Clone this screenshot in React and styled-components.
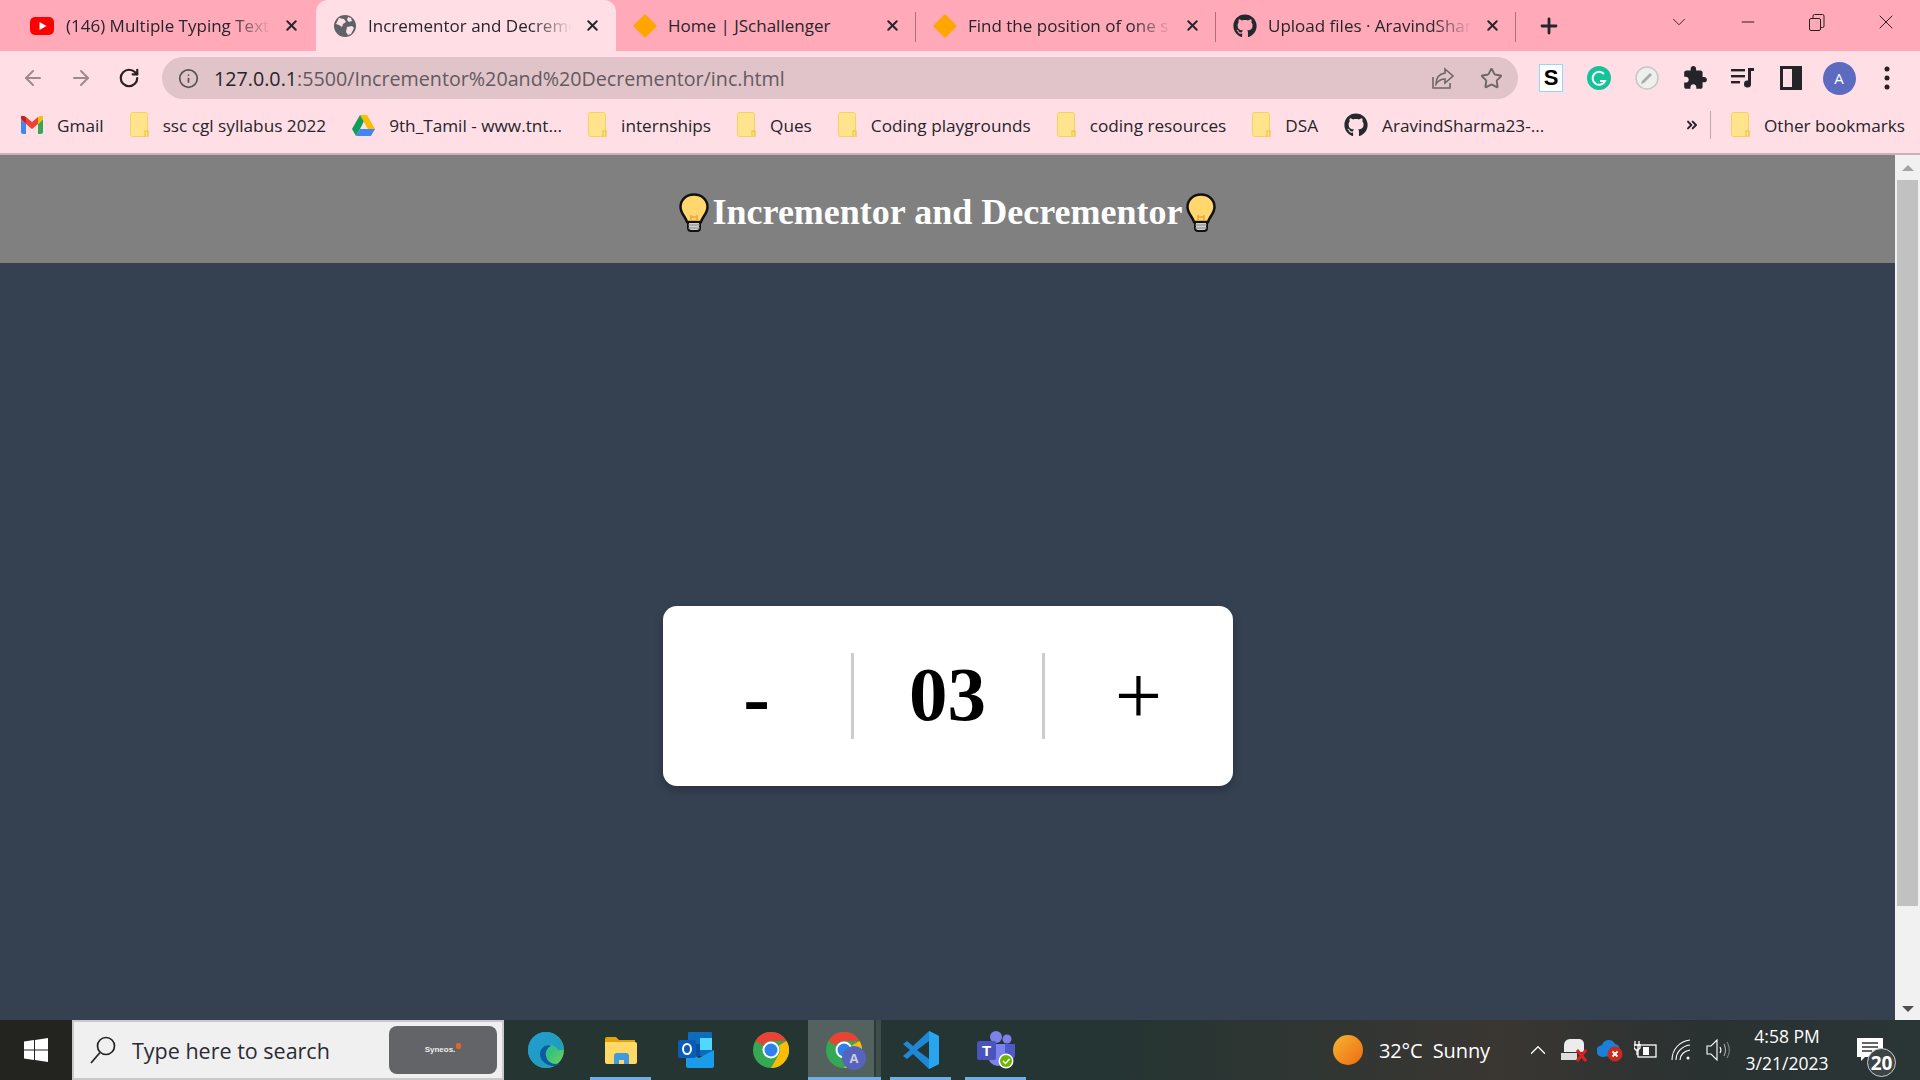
import React from 'react';
import styled, { createGlobalStyle } from 'styled-components';
import { X, Plus, ArrowLeft, ArrowRight, RotateCw, Info, Star, ChevronUp, ChevronDown, Minus, ChevronsRight } from 'lucide-react';
import { FaGithub } from 'react-icons/fa';

const Global = createGlobalStyle`
  html, body { margin: 0; padding: 0; width: 1920px; height: 1080px; overflow: hidden; background: #354051; }
  * { box-sizing: border-box; }
  #root { width: 1920px; height: 1080px; }
`;
const UI = '"Open Sans", "Noto Sans", sans-serif';

const Screen = styled.div`display: flex; flex-direction: column; width: 1920px; height: 1080px; font-family: ${UI}; color: #25252b;`;
const TabStrip = styled.div`display: flex; align-items: stretch; height: 51px; padding-left: 16px; background: #ffa9b9;`;
const Tab = styled.div`
  position: relative; display: flex; align-items: center; width: 300px; padding: 0 ${p => p.$first ? 16 : 15}px 0 ${p => p.$first ? 14 : 17}px;
  border-radius: 12px 12px 0 0; background: ${p => p.$active ? '#ffdfe5' : 'transparent'};
  ${p => p.$sep && `&::after { content: ''; position: absolute; right: 0; top: 12px; height: 30px; width: 1px; background: #a5737e; }`}
`;
const TabIcon = styled.span`display: flex; align-items: center; justify-content: center; flex: none; width: 24px; height: 24px; margin-right: ${p => p.$first ? 12 : 11}px;`;
const TabTitle = styled.span`
  flex: 1; min-width: 0; white-space: nowrap; overflow: hidden; font-size: 17px;
  mask-image: linear-gradient(to right, #000 80%, transparent 100%);
  ${p => p.$noFade && 'mask-image: none;'}
`;
const TabClose = styled(X)`flex: none; margin-left: 12px; margin-right: 0; stroke-width: 2.8;`;
const NewTab = styled(Plus)`align-self: center; margin-left: 21px; stroke-width: 2.8;`;
const WindowControls = styled.div`display: flex; margin-left: auto; align-items: center; height: 44px;`;
const WinBtn = styled.div`display: flex; align-items: center; justify-content: center; width: 69px; height: 44px; color: #222;`;

const Toolbar = styled.div`display: flex; align-items: center; height: 48px; padding: 6px 0 0 9px; background: #ffdfe5;`;
const NavBtn = styled.div`display: flex; align-items: center; justify-content: center; width: 48px; height: 42px; color: ${p => p.$dim ? '#9b8b90' : '#222'};`;
const UrlBar = styled.div`display: flex; align-items: center; width: 1356px; height: 42px; margin-left: 9px; padding: 0 3px 0 16px; border-radius: 21px; background: #e0c4c9;`;
const UrlInfo = styled(Info)`flex: none; color: #555; margin-right: 15px;`;
const UrlText = styled.span`flex: 1; font-size: 19.7px; color: #635a60; white-space: nowrap; b { font-weight: 400; color: #25252b; }`;
const UrlAction = styled.div`display: flex; justify-content: center; width: 48px; color: #6e6569;`;
const ExtBtn = styled.div`display: flex; align-items: center; justify-content: center; flex: none; width: 48px; height: 42px; color: #222428;`;
const Extensions = styled.div`display: flex; margin-left: 9px;`;
const SBox = styled.div`display: flex; align-items: center; justify-content: center; width: 24px; height: 28px; background: #fff; border: 1px solid #8ed8ff; color: #000; font: 900 22px/1 "Liberation Sans", sans-serif;`;
const Avatar = styled.div`display: flex; align-items: center; justify-content: center; width: 33px; height: 33px; border-radius: 50%; background: #5c6bc0; color: #fff; font-size: 15px;`;

const Bookmarks = styled.div`display: flex; align-items: center; height: 56px; padding: 0 15px 2px 21px; background: #ffdfe5; border-bottom: 2px solid #cbb2b8;`;
const Bookmark = styled.div`display: flex; align-items: center; gap: 14px; margin-right: 26px; font-size: 17.2px; white-space: nowrap;`;
const BookmarkRight = styled(Bookmark)`margin-right: 0; margin-left: 20px;`;
const Chevrons = styled(ChevronsRight)`margin-left: auto; margin-right: 10px; stroke-width: 3;`;
const BarSep = styled.div`flex: none; width: 1px; height: 28px; background: #bfa6ac;`;

const Viewport = styled.div`flex: 1; min-height: 0; display: flex;`;
const Page = styled.div`flex: 1; display: flex; flex-direction: column; background: #354051; min-width: 0;`;
const Header = styled.header`display: flex; align-items: center; justify-content: center; gap: 4px; height: 108px; padding-top: 6px; background: #808080;`;
const Title = styled.h1`margin: 0; font: 700 36px/1 "Liberation Serif", "Times New Roman", serif; color: #fff;`;
const Stage = styled.main`flex: 1; display: flex; justify-content: center; align-items: flex-start; padding-top: 343px;`;
const Card = styled.div`display: grid; grid-template-columns: 188px 194px 188px; align-items: center; height: 180px; border-radius: 14px; background: #fff; box-shadow: 0 4px 10px rgba(0,0,0,.22);`;
const Cell = styled.div`
  display: flex; align-items: center; justify-content: center; height: 86px; padding-top: ${p => p.$dy || 0}px; padding-bottom: ${p => p.$up || 0}px;
  font: ${p => p.$weight || 700} ${p => p.$size || 77}px/1 "Liberation Serif", "Times New Roman", serif; color: #000;
  ${p => p.$divided && 'border-left: 3px solid #ccc; border-right: 3px solid #ccc;'}
`;
const Scrollbar = styled.aside`flex: none; display: flex; flex-direction: column; align-items: center; width: 25px; background: #f1f1f1; padding-top: 10px;`;
const ScrollArrow = styled.div`flex: none; width: 0; height: 0; border-left: 6px solid transparent; border-right: 6px solid transparent; ${p => p.$down ? 'border-top: 6px solid #505050; margin-bottom: 8px;' : 'border-bottom: 6px solid #a3a3a3;'}`;
const Thumb = styled.div`flex: none; width: 21px; height: 726px; margin-top: 9px; background: #c1c1c1;`;
const ScrollSpacer = styled.div`flex: 1;`;

const Taskbar = styled.footer`display: flex; align-items: stretch; height: 60px; color: #fff; background: linear-gradient(90deg, #23241f 0, #23241f 72px, #243532 510px, #243533 1100px, #3a3632 1500px, #2a3231 1700px, #2a3536 100%);`;
const StartBtn = styled.div`display: flex; align-items: center; justify-content: center; width: 72px;`;
const SearchBox = styled.div`display: flex; align-items: center; width: 432px; padding: 0 5px 0 16px; background: #f0f0f0; border: 2px solid #c9c9c9; color: #2a2a35; font-size: 21.5px;`;
const SearchGlyph = styled.span`display: flex; flex: none; margin-right: 16px;`;
const SearchText = styled.span`flex: 1;`;
const Promo = styled.div`display: flex; align-items: center; justify-content: center; gap: 1px; width: 108px; height: 48px; border-radius: 8px; background: #626468; color: #eee; font: 700 8px/1 "Liberation Sans", sans-serif;`;
const PromoDot = styled.i`width: 5px; height: 6px; margin-top: -8px; border-radius: 2px; background: #e8632a;`;
const Apps = styled.div`display: flex; padding-left: 4px;`;
const AppSlot = styled.div`
  position: relative; display: flex; align-items: center; justify-content: center; width: 75px;
  ${p => p.$active && 'background: linear-gradient(90deg, #53625f 66px, #2c3b39 66px, #2c3b39 68px, #3f4d4b 68px, #3f4d4b 73px, transparent 73px);'}
  ${p => p.$running && `&::after { content: ''; position: absolute; left: ${p.$active ? 0 : 7}px; right: ${p.$active ? 2 : 7}px; bottom: 0; height: 3px; background: #6cb0e5; }`}
`;
const ProfileWrap = styled.div`position: relative; display: flex; margin-left: -3px;`;
const ProfileBadge = styled.span`position: absolute; right: -4px; bottom: -2px; display: flex; align-items: center; justify-content: center; width: 24px; height: 24px; border-radius: 50%; background: #5664bd; color: #ccd; font-size: 13px; font-weight: 700;`;
const Tray = styled.div`display: flex; align-items: center; margin-left: auto;`;
const Weather = styled.div`display: flex; align-items: center; gap: 16px; font-size: 20px; letter-spacing: -0.1px; white-space: pre; margin-right: 30px;`;
const TrayIcon = styled.div`display: flex; align-items: center; justify-content: center; width: 36px;`;
const Clock = styled.div`display: flex; flex-direction: column; align-items: center; width: 100px; margin-left: 1px; font-size: 17.5px; line-height: 27px;`;
const Notify = styled.div`position: relative; display: flex; justify-content: center; width: 83px; padding-right: 17px;`;
const NotifyBadge = styled.div`position: absolute; left: 30px; top: 10px; display: flex; align-items: center; justify-content: center; width: 29px; height: 29px; border-radius: 50%; border: 1.5px solid #ccc; background: #3d4444; font-size: 19px; font-weight: 700;`;

const Yt = () => <svg width="24" height="18" viewBox="0 0 24 18"><rect width="24" height="18" rx="5" fill="#f00"/><path d="M9.5 5v8l7-4z" fill="#fff"/></svg>;
const Globe = () => <svg width="22" height="22" viewBox="0 0 22 22"><circle cx="11" cy="11" r="11" fill="#5f6368"/><path d="M5 3l5 1 2 3-3 2-1 3-3-2-3-1zM13 12l5-1 2 2-3 6-3 1-2-3zM14 2l3 1 1 3-3 1-2-2z" fill="#ffdfe5"/></svg>;
const Diamond = () => <svg width="24" height="24" viewBox="0 0 24 24"><path d="M12 0l12 12-12 12L0 12z" fill="#ffa500"/></svg>;
const Folder = () => <svg width="19" height="26" viewBox="0 0 19 26"><rect x=".5" y=".5" width="17" height="24" rx="2" fill="#ffe38d" stroke="#f5d25f"/><path d="M15 25v-6h3v6" fill="none" stroke="#f0c94f" strokeWidth="1.4"/></svg>;
const Gmail = () => <svg width="22" height="18" viewBox="0 0 22 18"><path d="M0 3v13a2 2 0 0 0 2 2h3V8z" fill="#4285f4"/><path d="M22 3v13a2 2 0 0 1-2 2h-3V8z" fill="#34a853"/><path d="M5 8l6 5 6-5V1l-6 5-6-5z" fill="#ea4335"/><path d="M0 3l5 5V1L3.5.2A2.2 2.2 0 0 0 0 3z" fill="#c5221f"/><path d="M22 3l-5 5V1l1.500-.8A2.200 2.200 0 0 1 22 3z" fill="#fbbc04"/></svg>;
const Drive = () => <svg width="23" height="21" viewBox="0 0 23 21"><path d="M8 0h7L8 14 4 21 0 14z" fill="#0f9d58"/><path d="M8 0h7l8 14h-7z" fill="#fbbc04"/><path d="M4 21l4-7h15l-4 7z" fill="#4285f4"/></svg>;
const Share = () => <svg width="24" height="24" viewBox="0 0 24 24" fill="none" stroke="currentColor" strokeWidth="1.6"><path d="M2 11v11h17v-5"/><path d="M14 3l8 7-8 7v-4c-5 0-7 2-9 5 0-6 3-10 9-11z"/></svg>;
const Grammarly = () => <svg width="24" height="24" viewBox="0 0 24 24"><circle cx="12" cy="12" r="12" fill="#15c39a"/><path d="M17 8a6.500 6.500 0 1 0 1 7h-5" fill="none" stroke="#fff" strokeWidth="2"/></svg>;
const Compass = () => <svg width="24" height="24" viewBox="0 0 24 24"><circle cx="12" cy="12" r="11" fill="#eef0ee" stroke="#c5c9c5" strokeWidth="1.500"/><path d="M7 15l8-8 2 2-8 8-3 1z" fill="#aaa"/></svg>;
const Puzzle = () => <svg width="26" height="26" viewBox="0 0 24 24" fill="#222428"><path d="M20.500 11H19V7c0-1.100-.9-2-2-2h-4V3.500C13 2.120 11.880 1 10.500 1S8 2.120 8 3.500V5H4c-1.100 0-1.990.9-1.990 2v3.800H3.500c1.490 0 2.700 1.210 2.700 2.700s-1.210 2.700-2.700 2.700H2V20c0 1.100.9 2 2 2h3.800v-1.500c0-1.490 1.210-2.700 2.700-2.700 1.490 0 2.700 1.210 2.700 2.700V22H17c1.100 0 2-.9 2-2v-4h1.500c1.380 0 2.500-1.120 2.500-2.500S21.880 11 20.500 11z"/></svg>;
const Music = () => <svg width="24" height="22" viewBox="0 0 24 22" fill="#222428"><rect y="2" width="14" height="2.400"/><rect y="8" width="14" height="2.400"/><rect y="14" width="9" height="2.400"/><path d="M17 1h6v3h-3v13a3.500 3.500 0 1 1-3-3.400z"/></svg>;
const SidePanel = () => <svg width="22" height="24" viewBox="0 0 22 24"><rect width="22" height="24" fill="#222428"/><rect x="3" y="3" width="9" height="18" fill="#ffdfe5"/></svg>;
const Dots = () => <svg width="6" height="24" viewBox="0 0 6 24" fill="#222"><circle cx="3" cy="3" r="2.500"/><circle cx="3" cy="12" r="2.500"/><circle cx="3" cy="21" r="2.500"/></svg>;
const Bulb = () => <svg width="30" height="39" viewBox="0 0 30 39"><path d="M15 1.500C7 1.500 1.500 7 1.500 14c0 6.500 5 9.500 6.500 15h14c1.500-5.500 6.500-8.500 6.500-15C28.500 7 23 1.500 15 1.500z" fill="#ffd76e" stroke="#111" strokeWidth="2.500"/><path d="M12 29v-7M18 29v-7M12 24h6" stroke="#f2a33a" strokeWidth="1.500" fill="none"/><path d="M9 29h12v6a3 3 0 0 1-3 3h-6a3 3 0 0 1-3-3z" fill="#cfcfcf" stroke="#111" strokeWidth="2"/><path d="M9 32h12M9 35h12" stroke="#888" strokeWidth="1"/></svg>;
const Windows = () => <svg width="24" height="24" viewBox="0 0 24 24" fill="#fff"><path d="M0 3.500l10-1.400v9.300H0zM11 2l13-2v11.400H11zM0 12.500h10v9.400L0 20.500zM11 12.500h13V24l-13-2z"/></svg>;
const Lens = () => <svg width="26" height="28" viewBox="0 0 26 28" fill="none" stroke="#222" strokeWidth="1.700"><circle cx="16" cy="10" r="8.500"/><path d="M10 16.500L1 27"/></svg>;
const Edge = () => <svg width="36" height="36" viewBox="0 0 36 36"><defs><linearGradient id="e1" x1="0" y1="0" x2="1" y2="1"><stop offset="0" stopColor="#33c6d8"/><stop offset=".6" stopColor="#35c27e"/><stop offset="1" stopColor="#7bd44f"/></linearGradient></defs><circle cx="18" cy="18" r="18" fill="url(#e1)"/><path d="M18 0C8 0 0 8 0 18c0 10 8 18 18 18 5 0 9-2 12-5-6 2-14 1-17-5-2-5 0-11 6-13 5-1 9 1 11 5h6C35 8 28 0 18 0z" fill="#1b8fd6" opacity=".75"/><path d="M21 13c-5 0-9 4-9 9 0 6 6 12 14 12 2 0 4-1 6-2-7 1-13-2-14-8-1-4 1-8 5-10z" fill="#0c59a4"/></svg>;
const Explorer = () => <svg width="32" height="29" viewBox="0 0 32 29"><path d="M0 3a2 2 0 0 1 2-2h9l3 3h16v5H0z" fill="#e0a30c"/><path d="M0 6h30a2 2 0 0 1 2 2v18a2 2 0 0 1-2 2H2a2 2 0 0 1-2-2z" fill="#ffd966"/><path d="M9 28v-8a3 3 0 0 1 3-3h9a3 3 0 0 1 3 3v8h-5v-4h-5v4z" fill="#3f9ae0"/></svg>;
const Outlook = () => <svg width="36" height="36" viewBox="0 0 36 36"><rect x="10" y="0" width="24" height="24" rx="1" fill="#0f6cbd"/><rect x="22" y="6" width="12" height="12" fill="#50d9ff"/><rect x="10" y="12" width="12" height="12" fill="#0b4f9e"/><path d="M8 18l13 8 15-8v16a2 2 0 0 1-2 2H10a2 2 0 0 1-2-2z" fill="#1a9ce8"/><rect x="0" y="8" width="18" height="18" rx="2" fill="#0a5cb8"/><ellipse cx="9" cy="17" rx="4" ry="5" fill="none" stroke="#fff" strokeWidth="2"/></svg>;
const Chrome = () => <svg width="36" height="36" viewBox="0 0 36 36"><circle cx="18" cy="18" r="18" fill="#34a853"/><path d="M18 0a18 18 0 0 1 15.600 9H18a9 9 0 0 0-7.800 4.500L2.400 9A18 18 0 0 1 18 0z" fill="#ea4335"/><path d="M33.600 9A18 18 0 0 1 18 36l7.800-13.500A9 9 0 0 0 25.800 13.500z" fill="#fbbc04"/><circle cx="18" cy="18" r="8.500" fill="#fff"/><circle cx="18" cy="18" r="6.500" fill="#2f80ed"/></svg>;
const VSCode = () => <svg width="36" height="38" viewBox="0 0 36 38"><path d="M26 0l10 5v28l-10 5-16-15-6 5-4-3 7-6-7-6 4-3 6 5z" fill="#1e88d6"/><path d="M26 0l10 5v28l-10 5z" fill="#27a5ee"/><path d="M26 10L14 19l12 9z" fill="#243532"/></svg>;
const Teams = () => <svg width="38" height="38" viewBox="0 0 38 38"><circle cx="30" cy="8" r="4.500" fill="#7b83eb"/><circle cx="19" cy="6" r="6" fill="#7b83eb"/><path d="M22 13h16v11a6 6 0 0 1-6 6h-5z" fill="#5059c9"/><path d="M11 13h17v15a7 7 0 0 1-7 7 10 10 0 0 1-10-10z" fill="#7b83eb"/><rect x="0" y="10" width="19" height="19" rx="2" fill="#4b53bc"/><text x="9.500" y="25" textAnchor="middle" fontSize="15" fontWeight="700" fill="#fff" fontFamily="Liberation Sans">T</text><circle cx="29" cy="30" r="7.500" fill="#fff"/><circle cx="29" cy="30" r="6" fill="#6bb700"/><path d="M26 30l2.500 2.500 4-4.500" fill="none" stroke="#fff" strokeWidth="1.500"/></svg>;
const Sun = () => <svg width="30" height="30" viewBox="0 0 30 30"><defs><linearGradient id="s1" x1="0" y1="0" x2="1" y2="1"><stop offset="0" stopColor="#f2b632"/><stop offset="1" stopColor="#f06a10"/></linearGradient></defs><circle cx="15" cy="15" r="15" fill="url(#s1)"/></svg>;
const Usb = () => <svg width="26" height="24" viewBox="0 0 26 24"><path d="M3 7a6 6 0 0 1 6-6h9a5 5 0 0 1 5 5v8H3z" fill="#ececec"/><rect x="0" y="15" width="16" height="7" fill="#ddd"/><path d="M16 12l9 11M25 12l-9 11" stroke="#e02020" strokeWidth="3"/></svg>;
const Cloud = () => <svg width="26" height="24" viewBox="0 0 26 24"><path d="M6 19a6 6 0 0 1-1-12 7 7 0 0 1 13-1 6 6 0 0 1 2 11z" fill="#1a7fd8"/><circle cx="18" cy="16" r="7.500" fill="#c92a1e"/><path d="M15.500 13.500l5 5M20.500 13.500l-5 5" stroke="#fff" strokeWidth="1.800"/></svg>;
const Battery = () => <svg width="24" height="20" viewBox="0 0 24 20" fill="none" stroke="#fff" strokeWidth="1.300"><rect x="4" y="5" width="18" height="12"/><rect x="9" y="7" width="6" height="8" fill="#fff" stroke="none"/><path d="M1 1v4M5 1v4M0 5h6v3l-2 2H2L0 8zM3 10v5"/></svg>;
const Wifi = () => <svg width="22" height="22" viewBox="0 0 22 22" fill="none" stroke="#fff" strokeWidth="1.100"><path d="M1 21C1 10 9 2 19 1M5 21c0-8 6-14 14-15M9 21c0-5 4-9 10-10"/><circle cx="17" cy="19" r="1.500" fill="#fff" stroke="none"/></svg>;
const Speaker = () => <svg width="24" height="22" viewBox="0 0 24 22" fill="none" stroke="#fff" strokeWidth="1.100"><path d="M1 7h4l6-6v20l-6-6H1z"/><path d="M14 8c1.200 2 1.200 4 0 6" /><path d="M18 5c2 4 2 8 0 12" opacity=".6"/><path d="M21 3c3 5 3 11 0 16" opacity=".4"/></svg>;
const Bubble = () => <svg width="26" height="24" viewBox="0 0 26 24"><path d="M0 0h26v19H8l-4 4v-4H0z" fill="#fff"/><path d="M5 5h16M5 9h16M5 13h10" stroke="#333" strokeWidth="1.300"/></svg>;
const Restore = () => <svg width="16" height="17" viewBox="0 0 16 17" fill="none" stroke="#222" strokeWidth="1"><rect x=".5" y="4.500" width="11" height="12" rx="1.500"/><path d="M4 4V2a1.500 1.500 0 0 1 1.500-1.500h8A1.500 1.500 0 0 1 15 2v10a1.500 1.500 0 0 1-1.500 1.500H12"/></svg>;

const tabs = [
  { icon: <Yt />, title: '(146) Multiple Typing Text', first: true },
  { icon: <Globe />, title: 'Incrementor and Decreme', active: true },
  { icon: <Diamond />, title: 'Home | JSchallenger', noFade: true, sep: true },
  { icon: <Diamond />, title: 'Find the position of one s', sep: true },
  { icon: <FaGithub size={24} color="#24292e" />, title: 'Upload files · AravindShar', sep: true },
];
const marks = [
  { icon: <Gmail />, text: 'Gmail' },
  { icon: <Folder />, text: 'ssc cgl syllabus 2022' },
  { icon: <Drive />, text: '9th_Tamil - www.tnt...' },
  { icon: <Folder />, text: 'internships' },
  { icon: <Folder />, text: 'Ques' },
  { icon: <Folder />, text: 'Coding playgrounds' },
  { icon: <Folder />, text: 'coding resources' },
  { icon: <Folder />, text: 'DSA' },
  { icon: <FaGithub size={24} color="#24292e" />, text: 'AravindSharma23-...' },
];

export default function App() {
  return (
    <Screen>
      <Global />
      <TabStrip>
        {tabs.map(t => (
          <Tab key={t.title} $active={t.active} $first={t.first} $sep={t.sep}>
            <TabIcon $first={t.first}>{t.icon}</TabIcon>
            <TabTitle $noFade={t.noFade}>{t.title}</TabTitle>
            <TabClose size={17} />
          </Tab>
        ))}
        <NewTab size={24} />
        <WindowControls>
          <WinBtn><ChevronDown size={22} strokeWidth={1} /></WinBtn>
          <WinBtn><Minus size={20} strokeWidth={1.2} /></WinBtn>
          <WinBtn><Restore /></WinBtn>
          <WinBtn><X size={24} strokeWidth={1} /></WinBtn>
        </WindowControls>
      </TabStrip>
      <Toolbar>
        <NavBtn $dim><ArrowLeft size={24} /></NavBtn>
        <NavBtn $dim><ArrowRight size={24} /></NavBtn>
        <NavBtn><RotateCw size={22} strokeWidth={2.4} /></NavBtn>
        <UrlBar>
          <UrlInfo size={21} />
          <UrlText><b>127.0.0.1</b>:5500/Incrementor%20and%20Decrementor/inc.html</UrlText>
          <UrlAction><Share /></UrlAction>
          <UrlAction><Star size={23} /></UrlAction>
        </UrlBar>
        <Extensions>
          <ExtBtn><SBox>S</SBox></ExtBtn>
          <ExtBtn><Grammarly /></ExtBtn>
          <ExtBtn><Compass /></ExtBtn>
          <ExtBtn><Puzzle /></ExtBtn>
          <ExtBtn><Music /></ExtBtn>
          <ExtBtn><SidePanel /></ExtBtn>
          <ExtBtn><Avatar>A</Avatar></ExtBtn>
          <ExtBtn><Dots /></ExtBtn>
        </Extensions>
      </Toolbar>
      <Bookmarks>
        {marks.map(m => <Bookmark key={m.text}>{m.icon}{m.text}</Bookmark>)}
        <Chevrons size={16} />
        <BarSep />
        <BookmarkRight><Folder />Other bookmarks</BookmarkRight>
      </Bookmarks>
      <Viewport>
        <Page>
          <Header><Bulb /><Title>Incrementor and Decrementor</Title><Bulb /></Header>
          <Stage>
            <Card>
              <Cell $size={80} $dy={4}>-</Cell>
              <Cell $divided $up={3}>03</Cell>
              <Cell $size={84} $weight={400}>+</Cell>
            </Card>
          </Stage>
        </Page>
        <Scrollbar>
          <ScrollArrow />
          <Thumb />
          <ScrollSpacer />
          <ScrollArrow $down />
        </Scrollbar>
      </Viewport>
      <Taskbar>
        <StartBtn><Windows /></StartBtn>
        <SearchBox>
          <SearchGlyph><Lens /></SearchGlyph>
          <SearchText>Type here to search</SearchText>
          <Promo>Syneos.<PromoDot /></Promo>
        </SearchBox>
        <Apps>
          <AppSlot><Edge /></AppSlot>
          <AppSlot $running><Explorer /></AppSlot>
          <AppSlot><Outlook /></AppSlot>
          <AppSlot><Chrome /></AppSlot>
          <AppSlot $running $active><ProfileWrap><Chrome /><ProfileBadge>A</ProfileBadge></ProfileWrap></AppSlot>
          <AppSlot $running><VSCode /></AppSlot>
          <AppSlot $running><Teams /></AppSlot>
        </Apps>
        <Tray>
          <Weather><Sun />{'32°C  Sunny'}</Weather>
          <TrayIcon><ChevronUp size={26} strokeWidth={1.2} /></TrayIcon>
          <TrayIcon><Usb /></TrayIcon>
          <TrayIcon><Cloud /></TrayIcon>
          <TrayIcon><Battery /></TrayIcon>
          <TrayIcon><Wifi /></TrayIcon>
          <TrayIcon><Speaker /></TrayIcon>
          <Clock><span>4:58 PM</span><span>3/21/2023</span></Clock>
          <Notify><Bubble /><NotifyBadge>20</NotifyBadge></Notify>
        </Tray>
      </Taskbar>
    </Screen>
  );
}
